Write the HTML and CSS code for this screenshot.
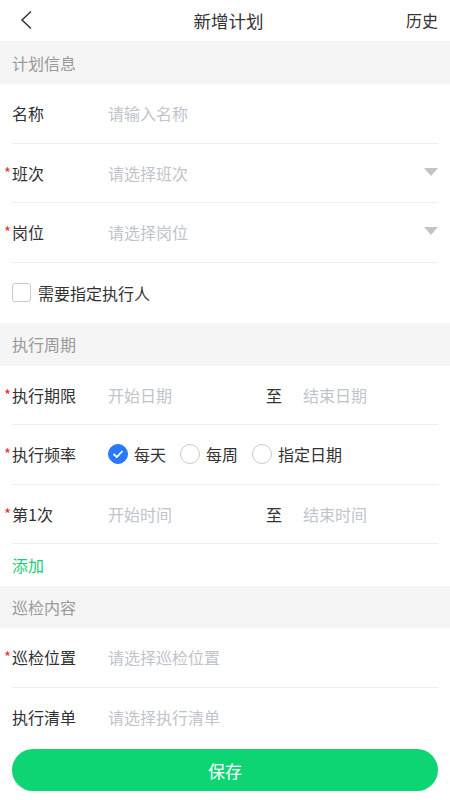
FILE: index.html
```html
<!DOCTYPE html>
<html lang="zh-CN">
<head>
    <meta charset="UTF-8">
    <meta name="viewport" content="width=device-width, initial-scale=1.0">
    <title>新增计划</title>
    <link rel="stylesheet" href="styles.css">
</head>
<body>
    <div class="nav-bar">
        <div class="nav-back">
            <svg width="14" height="20" viewBox="0 0 14 20">
                <polyline points="12,1.5 3,10 12,18.5" fill="none" stroke="#333" stroke-width="1.5" stroke-linejoin="miter"/>
            </svg>
        </div>
        <div class="nav-title">新增计划</div>
        <div class="nav-right">历史</div>
    </div>

    <div class="section-title">计划信息</div>
    <div class="form-row">
        <div class="label">名称</div>
        <div class="placeholder">请输入名称</div>
    </div>
    <div class="form-row">
        <div class="label required">班次</div>
        <div class="placeholder grow">请选择班次</div>
        <span class="arrow-down"></span>
    </div>
    <div class="form-row">
        <div class="label required">岗位</div>
        <div class="placeholder grow">请选择岗位</div>
        <span class="arrow-down"></span>
    </div>
    <div class="form-row check-row">
        <span class="checkbox"></span>
        <span class="check-text">需要指定执行人</span>
    </div>

    <div class="section-title tall">执行周期</div>
    <div class="form-row">
        <div class="label required">执行期限</div>
        <div class="placeholder range-start">开始日期</div>
        <div class="range-sep">至</div>
        <div class="placeholder">结束日期</div>
    </div>
    <div class="form-row">
        <div class="label required">执行频率</div>
        <div class="radio-group">
            <label class="radio checked"><span class="radio-dot">
                <svg width="12" height="10" viewBox="0 0 12 10"><polyline points="1.5,5 4.8,8 10.5,2" fill="none" stroke="#fff" stroke-width="1.8"/></svg>
            </span>每天</label>
            <label class="radio"><span class="radio-dot"></span>每周</label>
            <label class="radio"><span class="radio-dot"></span>指定日期</label>
        </div>
    </div>
    <div class="form-row">
        <div class="label required">第1次</div>
        <div class="placeholder range-start">开始时间</div>
        <div class="range-sep">至</div>
        <div class="placeholder">结束时间</div>
    </div>
    <div class="add-row">添加</div>

    <div class="section-title">巡检内容</div>
    <div class="form-row">
        <div class="label required">巡检位置</div>
        <div class="placeholder">请选择巡检位置</div>
    </div>
    <div class="form-row last">
        <div class="label">执行清单</div>
        <div class="placeholder">请选择执行清单</div>
    </div>

    <div class="footer">
        <button class="btn-save">保存</button>
    </div>
</body>
</html>
```

FILE: styles.css
```css
body {
    margin: 0;
    width: 450px;
    background-color: #fff;
    font-family: "Noto Sans CJK SC", "Noto Sans", sans-serif;
    color: #303133;
}
.nav-bar {
    height: 41px;
    display: flex;
    align-items: center;
    justify-content: space-between;
    padding: 0 12px 1px 19px;
    border-bottom: 1px solid #f0f0f0;
    box-sizing: content-box;
    height: 40px;
}
.nav-back {
    width: 40px;
    display: flex;
    align-items: center;
}
.nav-title {
    font-size: 17.5px;
    color: #333;
}
.nav-right {
    width: 40px;
    text-align: right;
    font-size: 16px;
    color: #333;
}
.section-title {
    height: 42px;
    line-height: 42px;
    padding-left: 12px;
    background-color: #f5f5f5;
    font-size: 16px;
    color: #999;
}
.section-title.tall {
    height: 43px;
    line-height: 43px;
}
.form-row {
    height: 58.5px;
    margin: 0 12px;
    display: flex;
    align-items: center;
    border-bottom: 1px solid #eeeff2;
    font-size: 16px;
}
.form-row.last,
.check-row {
    border-bottom: none;
}
.check-row {
    height: 60px;
}
.label {
    width: 96px;
    flex-shrink: 0;
    position: relative;
    color: #303133;
}
.label.required::before {
    content: "*";
    position: absolute;
    right: 100%;
    top: 1px;
    margin-right: 1px;
    color: #f0302f;
    font-size: 15px;
}
.placeholder {
    color: #c0c4cc;
    font-size: 16px;
}
.grow {
    flex: 1;
}
.range-start {
    width: 158px;
}
.range-sep {
    width: 37px;
    color: #333;
    font-size: 16px;
}
.arrow-down {
    width: 0;
    height: 0;
    border-left: 7px solid transparent;
    border-right: 7px solid transparent;
    border-top: 8px solid #c0c4cc;
    margin-top: -2px;
}
.checkbox {
    width: 17px;
    height: 17px;
    border: 1px solid #c8c9cc;
    border-radius: 3px;
    box-sizing: content-box;
    margin-right: 7px;
}
.check-text {
    color: #333;
}
.radio-group {
    display: flex;
    align-items: center;
    gap: 14px;
}
.radio {
    display: flex;
    align-items: center;
    color: #333;
}
.radio-dot {
    width: 18px;
    height: 18px;
    border: 1px solid #c8c9cc;
    border-radius: 50%;
    margin-right: 6px;
    display: flex;
    align-items: center;
    justify-content: center;
}
.radio.checked .radio-dot {
    background-color: #2979ff;
    border-color: #2979ff;
}
.add-row {
    height: 42px;
    line-height: 42px;
    padding-left: 12px;
    font-size: 16px;
    color: #19cf73;
}
.footer {
    padding: 3px 12px 0;
}
.btn-save {
    width: 100%;
    height: 42px;
    border: none;
    border-radius: 21px;
    background-color: #0ed574;
    color: #fff;
    font-size: 17px;
    font-family: inherit;
    box-shadow: 0 1px 2px rgba(0, 0, 0, 0.08);
}
```
